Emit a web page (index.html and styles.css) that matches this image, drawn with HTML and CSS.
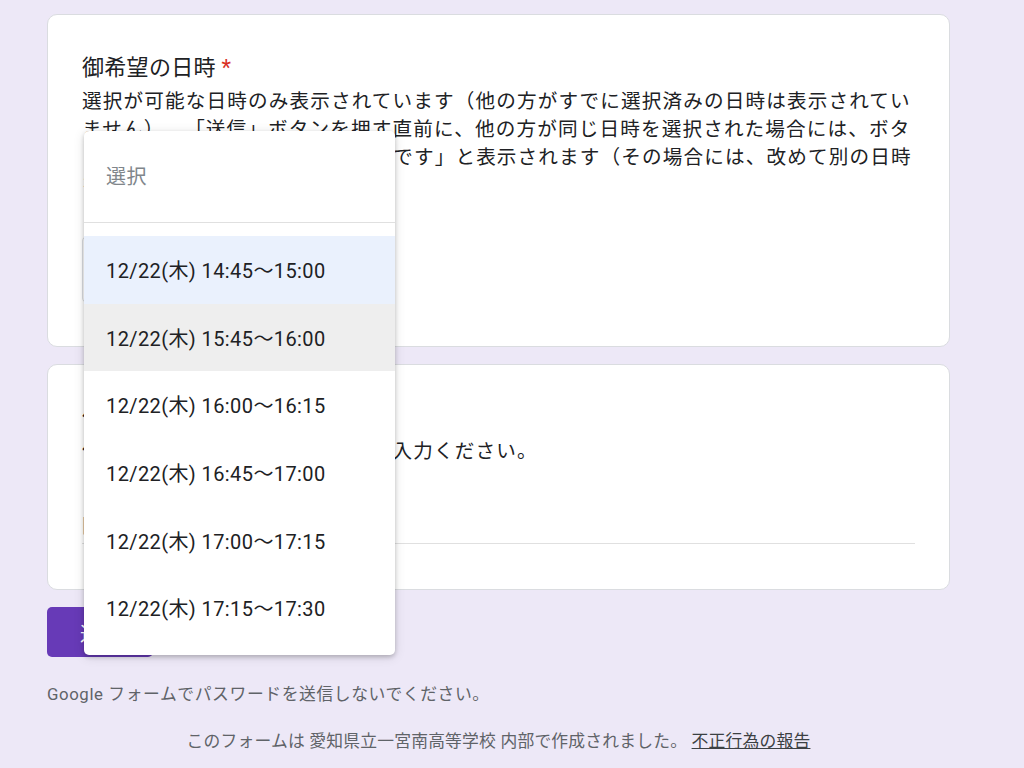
FILE: index.html
```html
<html>
<head>
	<meta charset="utf-8">
	<title>フォーム</title>
	<link rel="stylesheet" href="styles.css">
</head>
<body>

<div class="page">

	<div class="card">
		<div class="q-title">御希望の日時 <span class="req">*</span></div>
		<div class="q-desc">選択が可能な日時のみ表示されています（他の方がすでに選択済みの日時は表示されてい<br>ません）。「送信」ボタンを押す直前に、他の方が同じ日時を選択された場合には、ボタ<br>ンを押した後「選択できない日時です」と表示されます（その場合には、改めて別の日時<br>を選択し直してください）。</div>
		<div class="select-wrap">
			<div class="select">
				<span class="select-label">選択</span>
				<span class="select-arrow"></span>
			</div>

			<div class="popup">
				<div class="opt placeholder">選択</div>
				<div class="sep"></div>
				<div class="opt focused">12/22(木) 14:45～15:00</div>
				<div class="opt hover">12/22(木) 15:45～16:00</div>
				<div class="opt">12/22(木) 16:00～16:15</div>
				<div class="opt">12/22(木) 16:45～17:00</div>
				<div class="opt">12/22(木) 17:00～17:15</div>
				<div class="opt">12/22(木) 17:15～17:30</div>
			</div>
		</div>
	</div>

	<div class="card card2">
		<div class="q-title">保護者様の氏名 <span class="req">*</span></div>
		<div class="q-desc">保護者様の名前をフルネームでご入力ください。</div>
		<div class="answer">回答を入力</div>
	</div>

	<div class="submit">送信</div>

	<div class="note">Google フォームでパスワードを送信しないでください。</div>

	<div class="footer">このフォームは 愛知県立一宮南高等学校 内部で作成されました。 <a href="#">不正行為の報告</a></div>

</div>

</body>
</html>
```

FILE: styles.css
```css
body{
	margin:0;
	background-color:#ede8f7;
	font-family:Roboto,"Noto Sans CJK JP",sans-serif;
	color:#202124;
	text-spacing-trim:space-all;
}
.page{
	width:903px;
	margin-left:47px;
	padding-top:14px;
}

.card{
	background-color:#fff;
	border:1px solid #dadce0;
	border-radius:10px;
	padding:34px 34px 43px 34px;
	margin-bottom:17px;
}
.card2{
	padding-bottom:35px;
}
.q-title{
	font-size:22px;
	line-height:37px;
	letter-spacing:0.3px;
}
.req{
	color:#d93025;
}
.q-desc{
	margin-top:2px;
	font-size:19.6px;
	line-height:28px;
	letter-spacing:1.15px;
	white-space:nowrap;
}

/* dropdown */
.select-wrap{
	position:relative;
	margin-top:36px;
	width:300px;
}
.select{
	height:65px;
	border:1px solid #dadce0;
	border-radius:5px;
	display:flex;
	align-items:center;
	padding:0 22px;
	justify-content:space-between;
	font-size:19.6px;
}
.select-arrow{
	border-left:7px solid transparent;
	border-right:7px solid transparent;
	border-top:7px solid #5f6368;
}
.popup{
	position:absolute;
	top:-105px;
	left:2px;
	width:311px;
	background-color:#fff;
	border-radius:5px;
	box-shadow:0 2px 4px rgba(0,0,0,.2),0 2px 12px rgba(0,0,0,.12);
	padding:11px 0 13px 0;
}
.opt{
	height:67.6px;
	display:flex;
	align-items:center;
	padding-left:22px;
	font-size:20px;
	color:#202124;
	letter-spacing:0.4px;
}
.placeholder{
	color:#80868b;
	height:67px;
}
.sep{
	height:1px;
	background-color:#e0e0e0;
	margin:13px 0 13px 0;
}
.focused{
	background-color:#eaf1fd;
}
.hover{
	background-color:#eeeeee;
}

/* short answer */
.answer{
	margin-top:44px;
	margin-bottom:10px;
	height:33px;
	border-bottom:1px solid #e0e0e0;
	font-size:19.6px;
	color:#80868b;
}

.submit{
	width:106px;
	height:50px;
	background-color:#673ab7;
	color:#fff;
	border-radius:5px;
	display:flex;
	align-items:center;
	justify-content:center;
	font-size:19.6px;
	letter-spacing:0.4px;
}

.note{
	margin-top:25px;
	font-size:16.8px;
	line-height:24px;
	letter-spacing:0.6px;
	color:#5f6368;
}
.footer{
	margin-top:23px;
	text-align:center;
	font-size:16.8px;
	line-height:24px;
	letter-spacing:0.2px;
	color:#5f6368;
}
.footer a{
	color:#3c4043;
}
```
